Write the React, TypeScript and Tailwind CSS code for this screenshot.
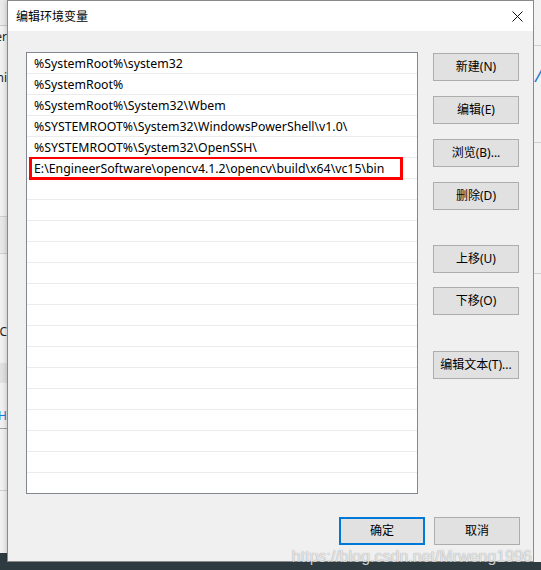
import React from "react";

const paths = [
  "%SystemRoot%\\system32",
  "%SystemRoot%",
  "%SystemRoot%\\System32\\Wbem",
  "%SYSTEMROOT%\\System32\\WindowsPowerShell\\v1.0\\",
  "%SYSTEMROOT%\\System32\\OpenSSH\\",
  "E:\\EngineerSoftware\\opencv4.1.2\\opencv\\build\\x64\\vc15\\bin",
];

const font = { fontFamily: '"Noto Sans", "Noto Sans CJK SC", sans-serif' };

function WinButton({ label, className = "" }: { label: string; className?: string }) {
  return (
    <div
      className={`flex h-[28px] w-[86px] items-center justify-center border border-[#adadad] bg-[#e1e1e1] text-[12px] text-black ${className}`}
    >
      {label}
    </div>
  );
}

export default function App() {
  const rows = Array.from({ length: 21 }, (_, i) => paths[i] ?? "");

  return (
    <div className="relative flex h-[570px] w-[541px] flex-col overflow-hidden bg-[#2e3c42]" style={font}>
      <div className="flex h-[562px]">
        {/* window behind, left side */}
        <div className="flex w-[7px] flex-col overflow-hidden bg-[#f2f2f2]">
          <div className="h-[25px] shrink-0 bg-[#ebebeb]" />
          <div className="h-px shrink-0 bg-[#c8c8c8]" />
          <div className="flex h-[22px] shrink-0 items-center justify-end whitespace-nowrap text-[12px] leading-none text-[#222]">er</div>
          <div className="flex h-[60px] shrink-0 items-center justify-end whitespace-nowrap text-[12px] leading-none text-[#222]">ni</div>
          <div className="h-[108px] shrink-0" />
          <div className="h-px shrink-0 bg-[#d0d0d0]" />
          <div className="h-[36px] shrink-0 bg-[#e9e9e9]" />
          <div className="h-px shrink-0 bg-[#d0d0d0]" />
          <div className="flex h-[109px] shrink-0 justify-end whitespace-nowrap pt-[72px] text-[12px] leading-none text-[#222]">oC</div>
          <div className="h-[20px] shrink-0 bg-[#e2e2e2]" />
          <div className="flex h-[45px] shrink-0 justify-end whitespace-nowrap pt-[27px] text-[12px] leading-none text-[#1e7bd6]">H</div>
          <div className="h-px shrink-0 bg-[#a0a0a0]" />
          <div className="h-[61px] shrink-0" />
          <div className="h-px shrink-0 bg-[#d0d0d0]" />
          <div className="flex-1" />
          <div className="h-[9px] shrink-0 bg-[#2e3c42]" />
        </div>

        {/* dialog */}
        <div className="flex w-[527px] flex-col border border-[#8a8a8a] bg-[#f0f0f0] shadow-[0_0_6px_rgba(0,0,0,0.25)]">
          <div className="flex h-[30px] items-center justify-between bg-white pl-[8px] pr-[9px]">
            <span className="pt-[1px] text-[12px] text-black">编辑环境变量</span>
            <svg width="11" height="11" viewBox="0 0 11 11" className="mr-[1px]">
              <path d="M0.5 0.5 L10.5 10.5 M10.5 0.5 L0.5 10.5" stroke="#111" strokeWidth="1" fill="none" />
            </svg>
          </div>

          <div className="flex flex-1 flex-col pl-[18px] pr-[13px] pt-[21px]">
            <div className="flex gap-[15px]">
              <div className="relative h-[442px] w-[392px] overflow-hidden border border-[#828790] bg-white">
                {rows.map((text, i) => (
                  <div
                    key={i}
                    className="flex h-[21px] items-center whitespace-nowrap border-b border-[#ebebeb] pl-[7px] pt-[2px] text-[12.3px] text-black"
                  >
                    {text}
                  </div>
                ))}
                <div className="absolute left-[2px] top-[104px] h-[23px] w-[374px] border-x-[3px] border-b-[3px] border-t-2 border-[#ff0000]" />
              </div>

              <div className="flex flex-col pt-[1px]">
                <WinButton label="新建(N)" />
                <WinButton label="编辑(E)" className="mt-[15px]" />
                <WinButton label="浏览(B)..." className="mt-[15px]" />
                <WinButton label="删除(D)" className="mt-[15px]" />
                <WinButton label="上移(U)" className="mt-[35px]" />
                <WinButton label="下移(O)" className="mt-[14px]" />
                <WinButton label="编辑文本(T)..." className="mt-[36px]" />
              </div>
            </div>

            <div className="mt-[23px] flex justify-end gap-[9px]">
              <div className="flex h-[28px] w-[86px] items-center justify-center border-2 border-[#0078d7] bg-[#e1e1e1] text-[12px] text-black">
                确定
              </div>
              <WinButton label="取消" />
            </div>
          </div>
        </div>

        {/* window behind, right side */}
        <div className="flex flex-1 flex-col overflow-hidden bg-[#f2f2f2]">
          <div className="h-[45px] shrink-0" />
          <div className="h-px shrink-0 bg-[#d0d0d0]" />
          <div className="flex h-[50px] shrink-0 items-center whitespace-nowrap pl-[1px] pt-[8px] text-[18px] italic leading-none text-[#1e7bd6]">/</div>
          <div className="mt-[46px] h-px shrink-0 bg-[#d0d0d0]" />
          <div className="mt-[130px] h-px shrink-0 bg-[#d0d0d0]" />
          <div className="flex-1" />
        </div>
      </div>
      <div className="h-[8px] bg-[#2e3c42]" />

      <div className="absolute bottom-[5px] right-[9px] whitespace-nowrap text-[16px] leading-none text-white/75 [font-family:'Liberation_Sans',sans-serif] [text-shadow:0_0_1px_rgba(0,0,0,0.45)]">
        https://blog.csdn.net/Mrweng1996
      </div>
    </div>
  );
}
